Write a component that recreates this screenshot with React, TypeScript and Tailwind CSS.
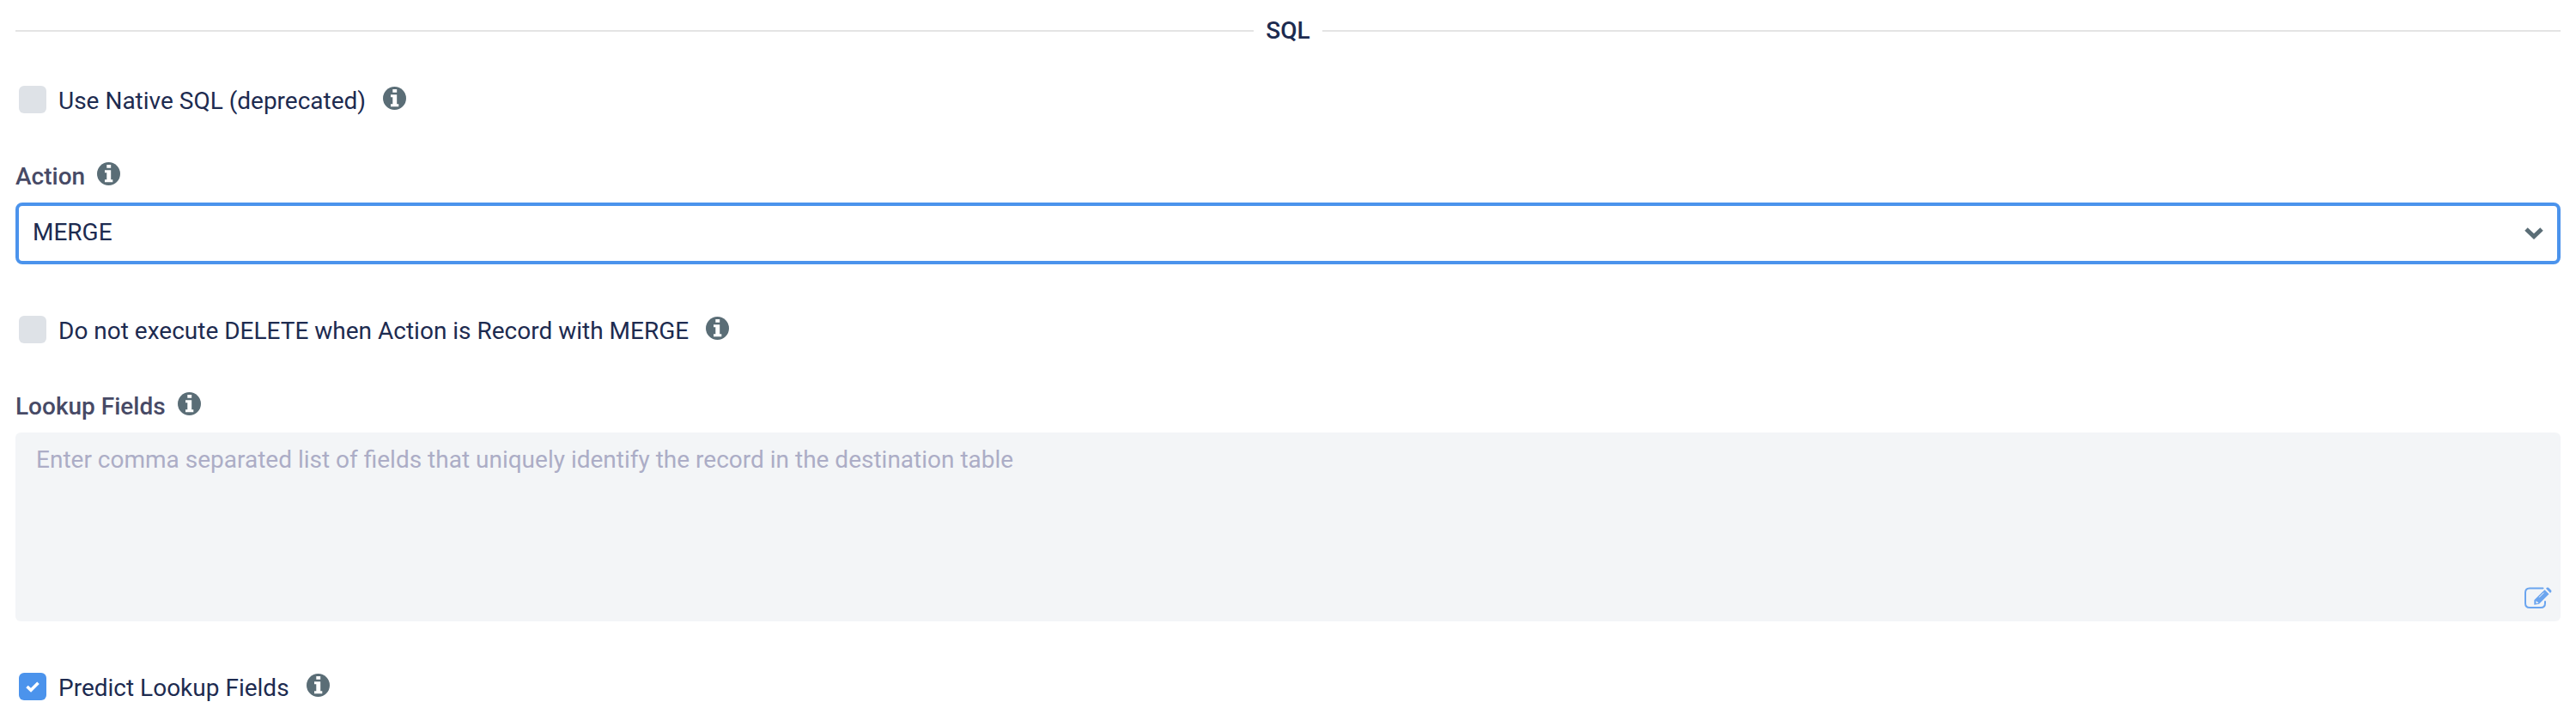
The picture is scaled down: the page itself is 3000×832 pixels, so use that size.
import type { ReactNode } from "react";

function InfoButton({ topic }: { topic: string }) {
  return (
    <button type="button" aria-label={`About ${topic}`} className="shrink-0 pt-px text-[#5a6d76]">
      <svg viewBox="0 0 27 27" className="size-[27px]" aria-hidden="true">
        <circle cx="13.500" cy="13.500" r="13.500" fill="currentColor" />
        <path
          d="M11.300 3H16.200V6.700H11.300ZM9 9.200H16.200V20.200H18.300V23.200H9V20.200H11.300V12.200H9Z"
          fill="#fff"
        />
      </svg>
    </button>
  );
}

function CheckboxField({
  id,
  label,
  defaultChecked = false,
}: {
  id: string;
  label: string;
  defaultChecked?: boolean;
}) {
  return (
    <div className="flex items-start px-1">
      <span className="grid shrink-0">
        <input
          id={id}
          type="checkbox"
          defaultChecked={defaultChecked}
          className="peer col-start-1 row-start-1 size-8 appearance-none rounded-md bg-[#dee2e7] checked:bg-[#4b93ec]"
        />
        <svg
          viewBox="0 0 16 13"
          className="pointer-events-none invisible col-start-1 row-start-1 h-[13px] w-4 place-self-center text-white peer-checked:visible"
          fill="none"
          aria-hidden="true"
        >
          <path d="M1.500 6L6 10.200L14.500 1.700" stroke="currentColor" strokeWidth="3.600" />
        </svg>
      </span>
      <label htmlFor={id} className="mr-5 ml-3.5 text-[#1d2b50]">
        {label}
      </label>
      <InfoButton topic={label} />
    </div>
  );
}

function Field({ id, label, children }: { id: string; label: string; children: ReactNode }) {
  return (
    <div className="flex flex-col gap-3">
      <div className="flex items-start gap-3.5">
        <label htmlFor={id} className="font-medium text-[#474a66]">
          {label}
        </label>
        <InfoButton topic={label} />
      </div>
      {children}
    </div>
  );
}

function EditIcon() {
  return (
    <svg viewBox="0 0 32 26" className="h-[26px] w-8" fill="none" aria-hidden="true">
      <path
        d="M21.500 1.500H6Q1 1.500 1 6.500V19Q1 24 6 24H19Q24 24 24 19V17"
        stroke="currentColor"
        strokeWidth="2"
        strokeLinecap="round"
      />
      <path d="M23.500 3.300L28.500 8.300L17 19.800L11.300 20.800V15.200Z" fill="currentColor" />
      <path
        d="M25 1.800L26 .8Q27 0 28 .8L31 3.800Q32 5 31 6L30 7Z"
        fill="currentColor"
      />
      <path d="M13.500 16L16.500 18.800L13.500 19.200Z" fill="#f3f5f7" />
      <path d="M17 12.200L22.500 6.700" stroke="#f3f5f7" strokeWidth="1" />
    </svg>
  );
}

export default function App() {
  return (
    <form className="bg-white px-[18px] pb-3 font-[Roboto,sans-serif] text-[28px] leading-9">
      <div className="flex items-center gap-3.5 pt-[18px] pb-[46px]">
        <hr className="flex-1 border-t-2 border-[#e4e4e4]" />
        <h2 className="font-medium text-[#1d2b50]">SQL</h2>
        <hr className="flex-1 border-t-2 border-[#e4e4e4]" />
      </div>

      <CheckboxField id="native-sql" label="Use Native SQL (deprecated)" />

      <div className="mt-[52px]">
        <Field id="action" label="Action">
          <div className="grid items-center">
            <select
              id="action"
              defaultValue="MERGE"
              className="col-start-1 row-start-1 h-[72px] w-full appearance-none rounded-lg border-4 border-[#4b93ec] bg-white px-4 pb-0.5 text-[#1d2b50] outline-none"
            >
              <option>MERGE</option>
            </select>
            <svg
              viewBox="0 0 22 14"
              className="pointer-events-none col-start-1 row-start-1 mr-5 h-3.5 w-[22px] justify-self-end text-[#5a6d76]"
              fill="none"
              aria-hidden="true"
            >
              <path d="M2 2L11 10.500L20 2" stroke="currentColor" strokeWidth="5" />
            </svg>
          </div>
        </Field>
      </div>

      <div className="mt-[60px]">
        <CheckboxField id="skip-delete" label="Do not execute DELETE when Action is Record with MERGE" />
      </div>

      <div className="mt-[52px]">
        <Field id="lookup-fields" label="Lookup Fields">
          <div className="relative">
            <textarea
              id="lookup-fields"
              placeholder="Enter comma separated list of fields that uniquely identify the record in the destination table"
              className="block h-[220px] w-full resize-none rounded-md bg-[#f3f5f7] px-6 py-3.5 text-[#1d2b50] outline-none placeholder:text-[#acadc6]"
            />
            <button
              type="button"
              aria-label="Edit lookup fields"
              className="absolute right-2.5 bottom-3.5 text-[#6ba5ef]"
            >
              <EditIcon />
            </button>
          </div>
        </Field>
      </div>

      <div className="mt-[60px]">
        <CheckboxField id="predict-lookup" label="Predict Lookup Fields" defaultChecked />
      </div>
    </form>
  );
}
